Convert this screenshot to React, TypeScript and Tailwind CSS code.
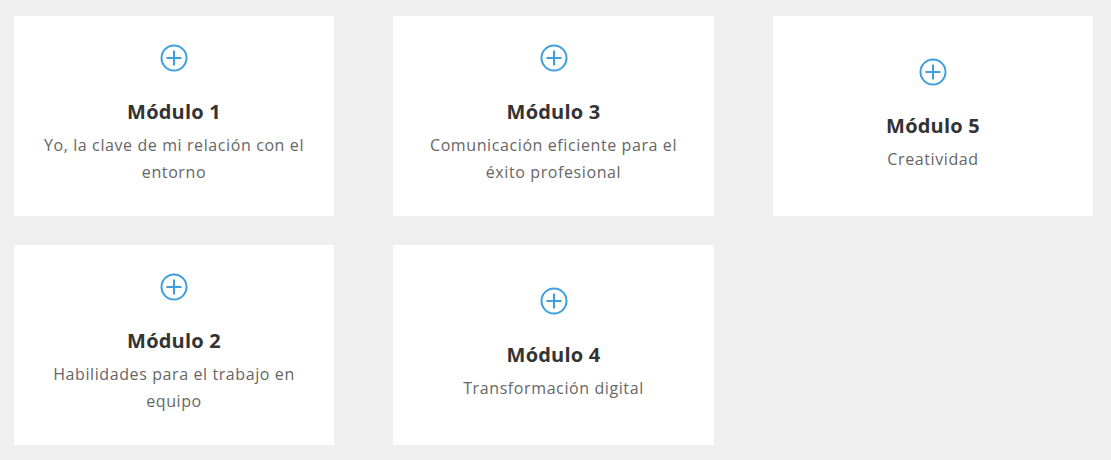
const modules = [
  { title: 'Módulo 1', desc: 'Yo, la clave de mi relación con el entorno' },
  { title: 'Módulo 3', desc: 'Comunicación eficiente para el éxito profesional' },
  { title: 'Módulo 5', desc: 'Creatividad' },
  { title: 'Módulo 2', desc: 'Habilidades para el trabajo en equipo' },
  { title: 'Módulo 4', desc: 'Transformación digital' },
];

const PlusCircle = () => (
  <svg width="28" height="28" viewBox="0 0 28 28" fill="none" stroke="#3d9fdc" strokeWidth="2">
    <circle cx="14" cy="14" r="12.5" />
    <path d="M14 6.5v15M6.5 14h15" />
  </svg>
);

export default function App() {
  return (
    <div className="min-h-screen w-full bg-[#efefef] pl-[14px] pt-[16px]" style={{ fontFamily: '"Open Sans", Lato, sans-serif' }}>
      <div className="grid grid-cols-[320px_321px_320px] gap-x-[59px] gap-y-[29px]">
        {modules.map(m => (
          <div key={m.title} className="h-[200px] bg-white flex flex-col items-center justify-center text-center px-[25px] pb-[2px]">
            <PlusCircle />
            <div className="mt-[28px] text-[20px] leading-[24px] font-bold tracking-[0.2px] text-[#333333]">{m.title}</div>
            <div className="mt-2 text-[16px] leading-[27px] tracking-[0.6px] text-[#666666]">{m.desc}</div>
          </div>
        ))}
      </div>
    </div>
  );
}
